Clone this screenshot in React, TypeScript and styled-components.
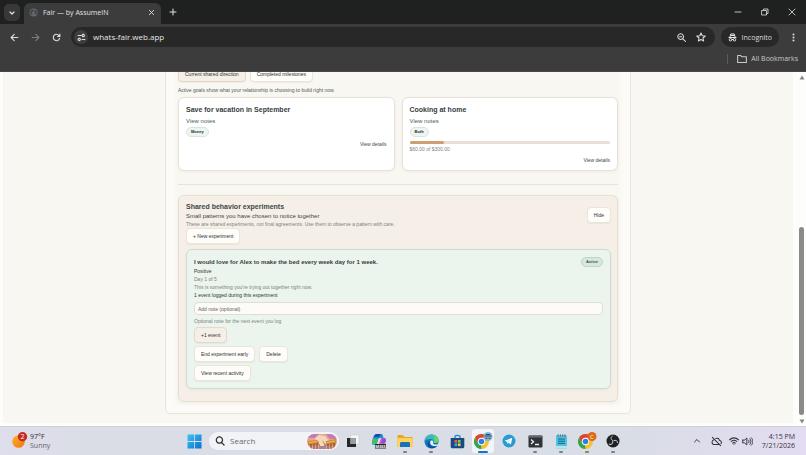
import React from "react";
import styled, { createGlobalStyle, css } from "styled-components";

const GlobalStyle = createGlobalStyle`
  *, *::before, *::after { box-sizing: border-box; }
  html, body { margin: 0; padding: 0; height: 100%; overflow: hidden; }
  button, input { font: inherit; color: inherit; margin: 0; }
  h2, h3, p { margin: 0; }
  svg { display: block; flex: none; }
`;

const uiFont = `"Open Sans", "Noto Sans", sans-serif`;
const pageFont = `"Liberation Sans", Arial, sans-serif`;

/* ---------- desktop ---------- */

const Desktop = styled.div`
  display: flex;
  flex-direction: column;
  height: 100vh;
  background: #3c3c3c;
  font-family: ${uiFont};
`;

const PlainButton = styled.button`
  display: flex;
  align-items: center;
  justify-content: center;
  padding: 0;
  border: 0;
  background: transparent;
`;

/* ---------- browser frame ---------- */

const TabStrip = styled.div`
  display: flex;
  align-items: flex-end;
  height: 24px;
  flex: none;
  padding: 0 1px 0 4px;
  background: #1f2120;
  color: #e3e3e3;
`;

const TabSearch = styled(PlainButton)`
  width: 16px;
  height: 17px;
  margin: 0 4px 3px 0;
  border-radius: 5px;
  background: #383838;
`;

const Tab = styled.div`
  display: flex;
  align-items: center;
  gap: 5px;
  width: 137px;
  height: 21px;
  padding: 0 6px 2px 5px;
  border-radius: 6px 6px 0 0;
  background: #3c3c3c;
  font-size: 7px;
  line-height: 10px;
`;

const TabTitle = styled.span`
  flex: 1;
  white-space: nowrap;
`;

const NewTab = styled(PlainButton)`
  width: 12px;
  height: 12px;
  margin: 0 auto 6px 6px;
`;

const WindowButtons = styled.div`
  display: flex;
  height: 24px;
`;

const WindowButton = styled(PlainButton)`
  width: 27px;
  height: 24px;
`;

const Toolbar = styled.div`
  display: flex;
  align-items: center;
  flex: none;
  height: 26px;
  padding: 0 8px 0 7px;
  background: #3c3c3c;
  color: #dcdcdc;
`;

const NavButton = styled(PlainButton)<{ $dim?: boolean }>`
  width: 14px;
  height: 14px;
  margin-right: 7px;
  color: ${(p) => (p.$dim ? "#7b7b7b" : "#dcdcdc")};
`;

const AddressBar = styled.div`
  display: flex;
  align-items: center;
  flex: 1;
  height: 20px;
  padding: 0 9px 0 3px;
  margin: 0 6px 0 1px;
  border-radius: 10px;
  background: #282828;
`;

const SiteInfo = styled(PlainButton)`
  width: 14px;
  height: 14px;
  border-radius: 50%;
  background: #3f3f3f;
`;

const AddressInput = styled.input`
  flex: 1;
  min-width: 0;
  padding: 0 0 0 5px;
  border: 0;
  outline: 0;
  background: transparent;
  color: #e6e6e6;
  font-size: 8px;
  line-height: 12px;
`;

const AddressAction = styled(PlainButton)`
  width: 10px;
  height: 10px;
  margin-left: 9px;
`;

const Incognito = styled.div`
  display: flex;
  align-items: center;
  gap: 5px;
  height: 20px;
  padding: 0 7px;
  border-radius: 10px;
  background: #282828;
  font-size: 7px;
`;

const MenuButton = styled(PlainButton)`
  width: 10px;
  height: 14px;
  margin-left: 9px;
`;

const BookmarksBar = styled.div`
  display: flex;
  align-items: center;
  justify-content: flex-end;
  flex: none;
  height: 22px;
  padding: 0 8px 4px 0;
  color: #c9c9c9;
  font-size: 7px;
  border-bottom: 1px solid #4a4847;
`;

const BookmarksButton = styled(PlainButton)`
  gap: 4px;
  padding-left: 9px;
  height: 10px;
  border-left: 1px solid #5c5c5c;
`;

/* ---------- viewport ---------- */

const Viewport = styled.div`
  display: flex;
  flex: 1;
  min-height: 0;
  padding-left: 3px;
  background: #fdfdfc;
`;

const PageArea = styled.main`
  display: flex;
  flex: 1;
  flex-direction: column;
  align-items: center;
  justify-content: flex-end;
  min-height: 0;
  overflow: hidden;
  margin-bottom: 3px;
  padding-bottom: 9px;
  background: #f9f7f2;
  font-family: ${pageFont};
  color: #3d4543;
`;

const ScrollTrack = styled.div`
  display: flex;
  flex-direction: column;
  align-items: center;
  width: 13px;
  padding: 3px 0 2px 4px;
  color: #858585;
`;

const ScrollThumb = styled.div`
  width: 5px;
  flex: 0 0 54%;
  margin: auto 0 4px;
  border-radius: 3px;
  background: #898a8a;
`;

const Sheet = styled.div`
  width: 100%;
  max-width: 466px;
  flex: none;
  padding: 11px 12px;
  border: 1px solid #e9e4dc;
  border-radius: 5px;
  background: #fdfbf7;
`;

const Stack = styled.div`
  display: flex;
  flex-direction: column;
  background: #f9f7f2;
  box-shadow: 0 0 3px 3px #f9f7f2;
`;

const ButtonRow = styled.div`
  display: flex;
  gap: 4px;
`;

const Button = styled.button<{ $tone?: "sand" }>`
  display: block;
  flex: none;
  height: 16px;
  padding: 0 6px;
  border: 1px solid ${(p) => (p.$tone ? "#e3d9c9" : "#ebe4d9")};
  border-radius: 4px;
  background: ${(p) => (p.$tone ? "#f5efe8" : "#fffdfa")};
  box-shadow: 0 1px 1px rgba(120, 90, 50, 0.07);
  color: #2b3230;
  font-size: 5px;
  line-height: 8px;
  white-space: nowrap;
`;

const Caption = styled.p<{ $soft?: boolean }>`
  font-size: 5px;
  line-height: 8px;
  color: ${(p) => (p.$soft ? "#7d837f" : "#2f3634")};
`;

const Lead = styled.p`
  font-size: 6px;
  line-height: 8px;
  color: #3d4543;
`;

const GoalsNote = styled(Caption)`
  margin: 4px 0 3px;
  color: #525a57;
`;

const GoalGrid = styled.div`
  display: grid;
  grid-template-columns: 1fr 1fr;
  gap: 7px;
`;

const surface = css`
  border: 1px solid #e8e1d7;
  border-radius: 6px;
  box-shadow: 0 1px 3px rgba(110, 90, 60, 0.07);
`;

const GoalCard = styled.article`
  ${surface}
  display: flex;
  flex-direction: column;
  align-items: flex-start;
  min-height: 74px;
  padding: 7px 7px 5px;
  background: #ffffff;
`;

const CardTitle = styled.h3<{ $small?: boolean }>`
  font-size: ${(p) => (p.$small ? 6 : 7)}px;
  line-height: 10px;
  color: #36403d;
`;

const TextLink = styled.a<{ $end?: boolean }>`
  font-size: ${(p) => (p.$end ? 5 : 6)}px;
  line-height: 8px;
  color: ${(p) => (p.$end ? "#414a47" : "#48605a")};
  text-decoration: none;
  margin-top: ${(p) => (p.$end ? 3 : 2)}px;
  align-self: ${(p) => (p.$end ? "flex-end" : "flex-start")};
`;

const Pill = styled.span<{ $active?: boolean }>`
  flex: none;
  height: 10px;
  padding: 0 4px;
  border: 1px solid ${(p) => (p.$active ? "#bfd2c5" : "#d9e5dd")};
  border-radius: 5px;
  background: ${(p) => (p.$active ? "#d7e8dd" : "#eef5f0")};
  color: ${(p) => (p.$active ? "#3f564b" : "#222d29")};
  font-size: 4px;
  font-weight: 700;
  line-height: 8px;
`;

const GoalPill = styled(Pill)`
  margin-top: 2px;
`;

const Meter = styled.div`
  width: 100%;
  height: 3px;
  margin: 4px 0 1px;
  border-radius: 2px;
  background: #e9dfd6;
`;

const MeterFill = styled.div`
  height: 3px;
  border-radius: 2px;
  background: #cd9f72;
`;

const Divider = styled.hr`
  width: 100%;
  height: 1px;
  margin: 13px 0 10px;
  border: 0;
  background: #e6e3dc;
`;

const Panel = styled.section`
  ${surface}
  padding: 6px 6px 12px 7px;
  background: #f5efe8;
  border-color: #e6dfd2;
`;

const SplitRow = styled.div<{ $center?: boolean }>`
  display: flex;
  justify-content: space-between;
  align-items: ${(p) => (p.$center ? "center" : "flex-start")};
`;

const PanelTitle = styled.h2`
  font-size: 7px;
  line-height: 10px;
  color: #414745;
`;

const Experiment = styled.article`
  ${surface}
  margin-top: 5px;
  padding: 7px;
  border-color: #cddcd3;
  background: #ebf5ee;
`;

const Field = styled.label`
  display: block;
  margin: 3px 0 2px;
`;

const NoteInput = styled.input`
  display: block;
  width: 100%;
  height: 13px;
  padding: 0 3px;
  border: 1px solid #dfddd4;
  border-radius: 4px;
  background: #fdfbf7;
  font-size: 5px;
  &::placeholder { color: #626664; opacity: 1; }
`;

const Actions = styled.div`
  display: flex;
  flex-direction: column;
  align-items: flex-start;
  gap: 3px;
  margin-top: 2px;
`;

/* ---------- taskbar ---------- */

const Taskbar = styled.footer`
  display: grid;
  grid-template-columns: 1fr auto 1fr;
  align-items: center;
  flex: none;
  height: 29px;
  padding: 0 11px;
  border-top: 1px solid #cfd1d6;
  background: linear-gradient(90deg, #dfdeec 0%, #dadde5 12%, #d9dde5 78%, #e3dcf2 100%);
  color: #2b2d31;
`;

const Weather = styled(PlainButton)`
  justify-content: flex-start;
  gap: 2px;
  text-align: left;
  font-size: 7px;
  line-height: 9px;
`;

const Muted = styled.span`
  color: #62656b;
`;

const Apps = styled.nav`
  display: flex;
  align-items: center;
  padding-left: 6px;
`;

const AppButton = styled(PlainButton)<{ $open?: boolean; $active?: boolean }>`
  position: relative;
  width: 22px;
  height: 24px;
  margin: 0 2px;
  border-radius: 3px;
  background: ${(p) => (p.$active ? "#f2f4f8" : "transparent")};
  &::after {
    content: "";
    position: absolute;
    bottom: 0;
    left: 50%;
    transform: translateX(-50%);
    width: ${(p) => (p.$active ? 10 : 4)}px;
    height: 2px;
    border-radius: 1px;
    background: ${(p) => (p.$active ? "#1474c4" : p.$open ? "#7b7f86" : "transparent")};
  }
`;

const StartButton = styled(PlainButton)`
  width: 16px;
  height: 16px;
  margin-right: 7px;
`;

const SearchBox = styled.label`
  display: flex;
  align-items: center;
  gap: 5px;
  width: 130px;
  height: 18px;
  margin-right: 1px;
  padding: 0 1px 0 6px;
  border-radius: 9px;
  background: #f1f3f7;
`;

const SearchInput = styled.input`
  flex: 1;
  min-width: 0;
  padding: 0;
  border: 0;
  outline: 0;
  background: transparent;
  font-size: 8px;
  line-height: 12px;
  &::placeholder { color: #65686e; opacity: 1; }
`;

const Tray = styled.div`
  display: flex;
  align-items: center;
  justify-content: flex-end;
  gap: 4px;
  color: #33353a;
`;

const TrayButton = styled(PlainButton)<{ $wide?: boolean }>`
  width: ${(p) => (p.$wide ? 16 : 10)}px;
  height: 12px;
`;

const Clock = styled.div`
  margin-left: 5px;
  text-align: right;
  font-size: 7px;
  line-height: 9px;
`;

/* ---------- icons ---------- */

type LineProps = { size?: number; d: string; w?: number; box?: number };
const Line = ({ size = 10, d, w = 1.6, box = 16 }: LineProps) => (
  <svg width={size} height={size} viewBox={`0 0 ${box} ${box}`} fill="none" stroke="currentColor" strokeWidth={w} strokeLinecap="round" strokeLinejoin="round">
    <path d={d} />
  </svg>
);

const Globe = () => (
  <svg width="9" height="9" viewBox="0 0 18 18">
    <circle cx="9" cy="9" r="8" fill="#64696f" />
    <path d="M4 4l4-1 2 2-2 3-3 1 2 3-1 3-3-3-1-4zM12 3l3 3 1 4-3 4-2-3 1-2-2-2z" fill="#42464b" />
  </svg>
);

const IncognitoIcon = () => (
  <svg width="9" height="9" viewBox="0 0 18 18" fill="none" stroke="#e6e6e6" strokeWidth="2">
    <path d="M1 9h16M4 8l1.500-6h7L14 8" />
    <path d="M6 5h6" />
    <circle cx="5" cy="13.500" r="2.500" />
    <circle cx="13" cy="13.500" r="2.500" />
    <path d="M7.500 13h3" />
  </svg>
);

const WeatherIcon = () => (
  <svg width="17" height="18" viewBox="0 0 17 18">
    <defs>
      <linearGradient id="sun" x1="0" y1="0" x2="1" y2="1">
        <stop offset="0" stopColor="#fdb52a" />
        <stop offset="1" stopColor="#ee7411" />
      </linearGradient>
    </defs>
    <circle cx="7.500" cy="9.500" r="6.300" fill="url(#sun)" />
    <circle cx="11.500" cy="4.700" r="4.700" fill="#c42b22" />
    <text x="11.500" y="7.200" textAnchor="middle" fontSize="7" fontFamily="Open Sans" fill="#fff">2</text>
  </svg>
);

const WindowsIcon = () => (
  <svg width="15" height="15" viewBox="0 0 15 15">
    <defs>
      <linearGradient id="win" x1="0" y1="0" x2="1" y2="1">
        <stop offset="0" stopColor="#3fc4f5" />
        <stop offset="1" stopColor="#0670cf" />
      </linearGradient>
    </defs>
    <path d="M.5.5h6.600v6.600H.5zM7.900.5h6.600v6.600H7.900zM.5 7.900h6.600v6.600H.5zM7.900 7.900h6.600v6.600H7.900z" fill="url(#win)" />
  </svg>
);

const SearchArt = () => (
  <svg width="32" height="17" viewBox="0 0 32 17">
    <defs>
      <clipPath id="art"><rect x="1" y="1" width="30" height="15" rx="7.500" /></clipPath>
    </defs>
    <g clipPath="url(#art)">
      <path d="M0 0h32v17H0z" fill="#eda38c" />
      <path d="M0 0h14l-5 5H0zM20 1h12v5h-8z" fill="#bd7fb6" />
      <path d="M9 5l4-3 6 1 4 5-3 3h-8z" fill="#f6d5bf" />
      <path d="M2 8l9-1 2 2v3L2 13zM20 8l10-2v6l-10 1z" fill="#d08a3a" />
      <path d="M3 9.500l8-1M21 9.500l8-1.500" stroke="#f3bd58" strokeWidth="1" />
      <path d="M5 11v5M8 10.500v6M11 10v6M22 11v5M25 10.500v6M28 10v6" stroke="#6c4440" strokeWidth="1" />
      <path d="M13 12l4-4 3 4v5h-7z" fill="#a384a6" />
      <path d="M14 10l2-2 2 3v2h-4z" fill="#ffdf8d" />
    </g>
  </svg>
);

const TaskView = () => (
  <svg width="14" height="14" viewBox="0 0 14 14">
    <path d="M4.500 1H13v9H4.500z" fill="#f5f5f5" stroke="#c2c4c8" strokeWidth=".5" />
    <path d="M1 4h3.500v6H10v3H1z" fill="#242628" />
    <path d="M4.500 4H10v6H4.500z" fill="#9b9da0" />
  </svg>
);

const Copilot = () => (
  <svg width="16" height="16" viewBox="0 0 16 16">
    <path d="M6 1h4c2 0 2 2 2.500 4H9C7 5 7 7 6.500 9 6 11 5 12 3 12 0 12 1 9 1.500 7 2.500 3 3 1 6 1z" fill="#1d8ad8" />
    <path d="M3 4c1-2 1-3 3-3h4L8 4z" fill="#194aa9" />
    <path d="M1 9l2-4 4 1-1 4-2 2c-3 0-3-1-3-3z" fill="#45bd68" />
    <path d="M10 5h3c3 0 2 3 1.500 5-1 2-1.500 3-3 3H6l2-2z" fill="#d65fb8" />
    <path d="M12 5h2l1 3-3 3-2-2z" fill="#7659df" />
    <path d="M4 11h11v4.500H4z" fill="#25272a" />
    <text x="9.500" y="14.800" fontSize="4" fontWeight="700" textAnchor="middle" fontFamily="Open Sans" fill="#fff">M365</text>
  </svg>
);

const Folder = () => (
  <svg width="16" height="14" viewBox="0 0 16 14">
    <path d="M.5 1h5l2 2h8v10H.5z" fill="#e9a51f" />
    <path d="M.5 4h15v9H.5z" fill="#ffd35b" />
    <path d="M3 9.500c0-1 .5-1.500 1.500-1.500h7c1 0 1.500.5 1.500 1.500V13H3z" fill="#1971b9" />
  </svg>
);

const Edge = () => (
  <svg width="15" height="15" viewBox="0 0 15 15">
    <circle cx="7.500" cy="7.500" r="7" fill="#1674c7" />
    <path d="M.7 7C1 2.500 4.500.5 7.700.5c4 0 6.800 2.800 6.800 5.700 0 3-3.500 3.300-5 2.600.8-1.800-.5-3.700-3-3.700C3.800 5.100 1.500 6 .7 7z" fill="#39bdb2" />
    <path d="M9 1c4 1 5.500 3 5.500 5.200 0 3-3.500 3.300-5 2.600C11 6 11 3 9 1z" fill="#66d467" />
    <path d="M6 7c-2 3 1 6 5 5.500 1 0 2-.5 2.500-1C11 15.500 4 15 3.500 10.500 3.300 8.500 4.500 7.300 6 7z" fill="#124b99" />
    <path d="M6.500 7c1-.8 2.700-.3 2.700.8 0 .7-.4.900-.2 1.400C9.500 10.800 12 11 14 10l-.7 1.500c-2 1-5.800.7-6.800-1.500-.4-1-.5-2 0-3z" fill="#e4f1f5" />
  </svg>
);

const Store = () => (
  <svg width="15" height="15" viewBox="0 0 15 15">
    <path d="M5 4V2.500C5 1 10 1 10 2.500V4" fill="none" stroke="#2587cd" strokeWidth="1.300" />
    <path d="M.7 4h13.600v8.500c0 1-.7 1.800-1.700 1.800H2.400c-1 0-1.700-.8-1.700-1.800z" fill="#174a80" />
    <path d="M4.500 6h2.700v2.700H4.500z" fill="#f25b35" />
    <path d="M7.900 6h2.700v2.700H7.900z" fill="#83c63f" />
    <path d="M4.500 9.400h2.700v2.700H4.500z" fill="#32a8ea" />
    <path d="M7.900 9.400h2.700v2.700H7.900z" fill="#fac235" />
  </svg>
);

const Chrome = ({ badge }: { badge: "guest" | "user" }) => (
  <svg width="20" height="18" viewBox="0 0 20 18">
    <circle cx="8.500" cy="9.500" r="7.500" fill="#f3c32f" />
    <path d="M2 5.750A7.500 7.500 0 0 1 15 5.750H8.500L5.500 11z" fill="#dc4335" />
    <path d="M2 5.750L5.500 11.500 8 13l.5 4A7.500 7.500 0 0 1 2 5.750z" fill="#35a353" />
    <circle cx="8.500" cy="9.500" r="3.700" fill="#fff" />
    <circle cx="8.500" cy="9.500" r="2.800" fill="#347de0" />
    <circle cx="15" cy="4.500" r="4.500" fill={badge === "user" ? "#df6815" : "#80b6d7"} />
    {badge === "user" ? (
      <text x="15" y="6.500" textAnchor="middle" fontSize="6" fontFamily="Open Sans" fill="#fff">C</text>
    ) : (
      <path d="M11.500 4h7M13 2.500h4M12.500 6.300h2M15.500 6.300h2" stroke="#28485d" strokeWidth="1.100" fill="none" />
    )}
  </svg>
);

const Telegram = () => (
  <svg width="14" height="14" viewBox="0 0 14 14">
    <circle cx="7" cy="7" r="6.500" fill="#279bd2" />
    <path d="M2.700 6.800l7.600-3-1.400 6.700-2.300-1.700-1.200 1.100-.3-2z" fill="#fff" />
    <path d="M5 7.700l3.700-2.500-2.600 3z" fill="#a5cce3" />
  </svg>
);

const Terminal = () => (
  <svg width="15" height="13" viewBox="0 0 15 13">
    <rect x=".5" y=".5" width="14" height="12" rx="1" fill="#303235" />
    <path d="M.5 1.500c0-.6.400-1 1-1h12c.6 0 1 .4 1 1v1H.5z" fill="#696c70" />
    <path d="M3 4.500l2.500 2.300L3 9M7 9.500h4" stroke="#f2f2f2" strokeWidth="1.300" fill="none" />
  </svg>
);

const Notepad = () => (
  <svg width="13" height="15" viewBox="0 0 13 15">
    <rect x="1" y="1.500" width="11" height="13" rx="1" fill="#4dc3e1" />
    <path d="M1 12h11v1.500a1 1 0 0 1-1 1H2a1 1 0 0 1-1-1z" fill="#b7e4ef" />
    <path d="M3 .5v2M5.300.5v2M7.700.5v2M10 .5v2" stroke="#31586e" />
    <path d="M3 5h7M3 7.200h7M3 9.400h7" stroke="#17637f" />
  </svg>
);

const Obs = () => (
  <svg width="14" height="14" viewBox="0 0 14 14">
    <circle cx="7" cy="7" r="6.500" fill="#202124" />
    <g fill="none" stroke="#c9cacd" strokeWidth="1">
      <path d="M7 6.500c-2.500-.5-2.500-3.500-.5-4.500" />
      <path d="M7 6.500c-2.500-.5-2.500-3.500-.5-4.500" transform="rotate(120 7 7)" />
      <path d="M7 6.500c-2.500-.5-2.500-3.500-.5-4.500" transform="rotate(240 7 7)" />
    </g>
  </svg>
);

const ArrowHead = ({ down }: { down?: boolean }) => (
  <svg width="6" height="5" viewBox="0 0 6 5">
    <path d={down ? "M.5.500h5L3 4.500z" : "M3 .5l2.500 4h-5z"} fill="currentColor" />
  </svg>
);

/* ---------- sections ---------- */

const BrowserFrame = () => (
  <>
    <TabStrip>
      <TabSearch aria-label="Search tabs"><Line size={8} w={2.4} d="M4 6l4 4 4-4" /></TabSearch>
      <Tab>
        <Globe />
        <TabTitle>Fair — by AssumeIN</TabTitle>
        <PlainButton aria-label="Close tab"><Line size={7} w={2} d="M3 3l10 10M13 3L3 13" /></PlainButton>
      </Tab>
      <NewTab aria-label="New tab"><Line size={8} w={2} d="M8 2v12M2 8h12" /></NewTab>
      <WindowButtons>
        <WindowButton aria-label="Minimize"><Line size={8} d="M2 8h12" /></WindowButton>
        <WindowButton aria-label="Restore"><Line size={8} d="M2 5h9v9H2zM5 4V2h9v9h-2" /></WindowButton>
        <WindowButton aria-label="Close"><Line size={8} d="M2 2l12 12M14 2L2 14" /></WindowButton>
      </WindowButtons>
    </TabStrip>
    <Toolbar>
      <NavButton aria-label="Back"><Line size={9} w={2} d="M14 8H2M7.500 2.500L2 8l5.500 5.500" /></NavButton>
      <NavButton $dim aria-label="Forward"><Line size={9} w={2} d="M2 8h12M8.500 2.500L14 8l-5.500 5.500" /></NavButton>
      <NavButton aria-label="Reload"><Line size={9} w={2} d="M13.500 9.500A5.700 5.700 0 1 1 12.500 4.500L14 6M14 2v4h-4" /></NavButton>
      <AddressBar>
        <SiteInfo aria-label="Site information">
          <Line size={9} w={2} d="M2 4.500h5M11 2.500a2 2 0 1 0 .1 0M14 11.500H9M4 9.500a2 2 0 1 0 .1 0" />
        </SiteInfo>
        <AddressInput aria-label="Address" defaultValue="whats-fair.web.app" />
        <AddressAction aria-label="Zoom"><Line size={9} w={1.8} d="M6.500 1.500a5 5 0 1 0 .1 0M10.500 10.500L15 15M4.500 6.500h4" /></AddressAction>
        <AddressAction aria-label="Bookmark this page"><Line size={10} w={1.7} d="M8 1.500l2 4.400 4.800.5-3.600 3.200 1 4.800L8 12l-4.200 2.400 1-4.800L1.200 6.400 6 5.900z" /></AddressAction>
      </AddressBar>
      <Incognito><IncognitoIcon />Incognito</Incognito>
      <MenuButton aria-label="Menu">
        <svg width="3" height="9" viewBox="0 0 3 9" fill="currentColor"><circle cx="1.500" cy="1.500" r="1" /><circle cx="1.500" cy="4.500" r="1" /><circle cx="1.500" cy="7.500" r="1" /></svg>
      </MenuButton>
    </Toolbar>
    <BookmarksBar>
      <BookmarksButton><Line size={10} w={1.7} d="M1 2.500h5l2 2h7v9H1z" />All Bookmarks</BookmarksButton>
    </BookmarksBar>
  </>
);

type Goal = { title: string; tag: string; progress?: { percent: number; label: string } };
const goals: Goal[] = [
  { title: "Save for vacation in September", tag: "Money" },
  { title: "Cooking at home", tag: "Both", progress: { percent: 17, label: "$60.00 of $300.00" } },
];

const GoalView = ({ title, tag, progress }: Goal) => (
  <GoalCard>
    <CardTitle>{title}</CardTitle>
    <TextLink href="#notes">View notes</TextLink>
    <GoalPill>{tag}</GoalPill>
    {progress && (
      <>
        <Meter><MeterFill style={{ width: `${progress.percent}%` }} /></Meter>
        <Caption $soft>{progress.label}</Caption>
      </>
    )}
    <TextLink $end href="#details">View details</TextLink>
  </GoalCard>
);

const Experiments = () => (
  <Panel>
    <SplitRow $center>
      <div>
        <PanelTitle>Shared behavior experiments</PanelTitle>
        <Lead>Small patterns you have chosen to notice together</Lead>
        <Caption $soft>These are shared experiments, not final agreements. Use them to observe a pattern with care.</Caption>
      </div>
      <Button>Hide</Button>
    </SplitRow>
    <Button>+ New experiment</Button>
    <Experiment>
      <SplitRow>
        <CardTitle $small>I would love for Alex to make the bed every week day for 1 week.</CardTitle>
        <Pill $active>Active</Pill>
      </SplitRow>
      <Caption>Positive</Caption>
      <Caption $soft>Day 1 of 5</Caption>
      <Caption $soft>This is something you're trying out together right now.</Caption>
      <Caption>1 event logged during this experiment</Caption>
      <Field><NoteInput aria-label="Event note" placeholder="Add note (optional)" /></Field>
      <Caption $soft>Optional note for the next event you log</Caption>
      <Actions>
        <Button $tone="sand">+1 event</Button>
        <ButtonRow>
          <Button>End experiment early</Button>
          <Button>Delete</Button>
        </ButtonRow>
        <Button>View recent activity</Button>
      </Actions>
    </Experiment>
  </Panel>
);

const TaskbarView = () => (
  <Taskbar>
    <Weather>
      <WeatherIcon />
      <span>97°F<br /><Muted>Sunny</Muted></span>
    </Weather>
    <Apps aria-label="Apps">
      <StartButton aria-label="Start"><WindowsIcon /></StartButton>
      <SearchBox>
        <Line size={10} w={2} d="M7 1.500a5 5 0 1 0 .1 0M11 11l3.500 3.500" />
        <SearchInput aria-label="Search" placeholder="Search" />
        <SearchArt />
      </SearchBox>
      <AppButton aria-label="Task view"><TaskView /></AppButton>
      <AppButton aria-label="Copilot"><Copilot /></AppButton>
      <AppButton $open aria-label="File Explorer"><Folder /></AppButton>
      <AppButton $open aria-label="Edge"><Edge /></AppButton>
      <AppButton aria-label="Store"><Store /></AppButton>
      <AppButton $open $active aria-label="Chrome"><Chrome badge="guest" /></AppButton>
      <AppButton aria-label="Telegram"><Telegram /></AppButton>
      <AppButton $open aria-label="Terminal"><Terminal /></AppButton>
      <AppButton $open aria-label="Notepad"><Notepad /></AppButton>
      <AppButton $open aria-label="Chrome, second profile"><Chrome badge="user" /></AppButton>
      <AppButton $open aria-label="OBS"><Obs /></AppButton>
    </Apps>
    <Tray>
      <TrayButton $wide aria-label="Hidden icons"><Line size={8} w={2} d="M3 10l5-5 5 5" /></TrayButton>
      <TrayButton $wide aria-label="Cloud sync off"><Line size={11} w={1.5} d="M4.500 5.500C.5 6 .5 12.500 4.500 12.500h8M7 3.500c3-1 5 .5 5.200 3 3 0 3.500 3 2.300 4.500M2 2l12 12" /></TrayButton>
      <TrayButton aria-label="Wi-Fi"><Line size={10} w={1.7} d="M1 6c4-4 10-4 14 0M3.500 8.800c2.500-2.600 6.500-2.600 9 0M6 11.300c1-1 3-1 4 0M8 13.500h.01" /></TrayButton>
      <TrayButton aria-label="Volume"><Line size={11} w={1.4} d="M1 6v4h2.500L7 13V3L3.500 6zM9.500 6c1 1 1 3 0 4M11.500 4c2 2 2 6 0 8M13.500 2.500c3 3 3 8 0 11" /></TrayButton>
      <Clock>4:15 PM<br />7/21/2026</Clock>
    </Tray>
  </Taskbar>
);

export default function App() {
  return (
    <Desktop>
      <GlobalStyle />
      <BrowserFrame />
      <Viewport>
        <PageArea>
          <Sheet>
            <Stack>
              <ButtonRow>
                <Button $tone="sand">Current shared direction</Button>
                <Button>Completed milestones</Button>
              </ButtonRow>
              <GoalsNote>Active goals show what your relationship is choosing to build right now.</GoalsNote>
              <GoalGrid>{goals.map((goal) => <GoalView key={goal.title} {...goal} />)}</GoalGrid>
              <Divider />
              <Experiments />
            </Stack>
          </Sheet>
        </PageArea>
        <ScrollTrack>
          <ArrowHead />
          <ScrollThumb />
          <ArrowHead down />
        </ScrollTrack>
      </Viewport>
      <TaskbarView />
    </Desktop>
  );
}
